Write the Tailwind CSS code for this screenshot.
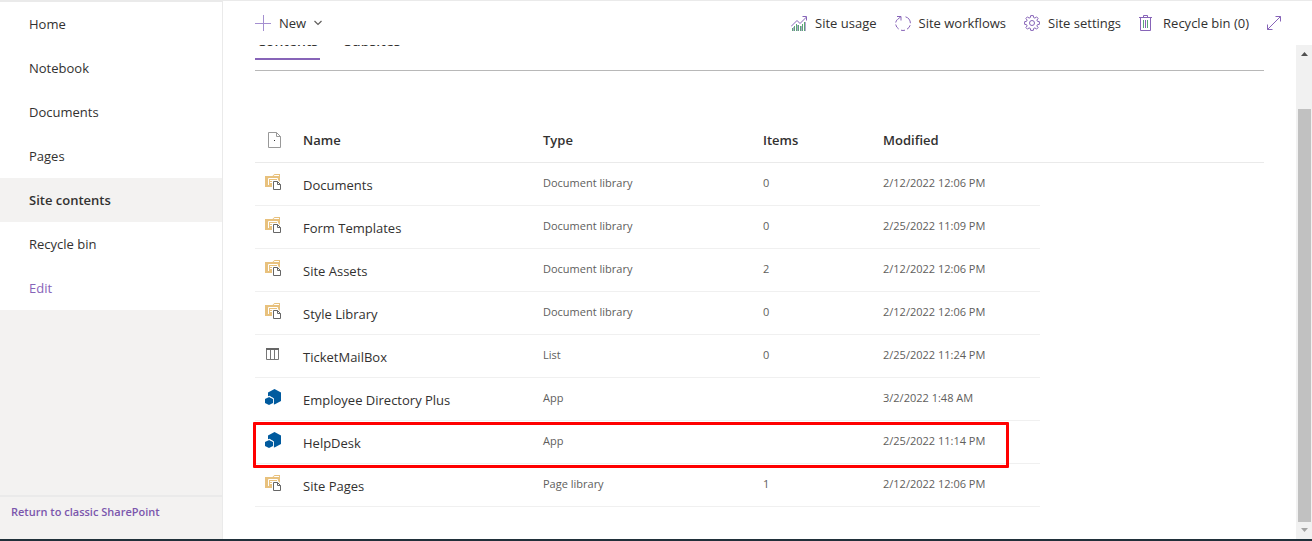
<!DOCTYPE html>
<html lang="en">
<head>
<meta charset="utf-8">
<meta name="viewport" content="width=device-width, initial-scale=1">
<title>Site contents</title>
<script src="https://cdn.jsdelivr.net/npm/@tailwindcss/browser@4"></script>
</head>
<body class="flex h-screen flex-col overflow-hidden bg-white font-['Open_Sans',sans-serif] text-[13px] leading-5 text-[#323130]">
<svg class="hidden" aria-hidden="true">
  <symbol id="library" viewBox="0 0 16 16">
    <path fill="#e8c17d" d="M0 2h7.500l2-2H15v13H0z"/>
    <path fill="#fff" d="M9.500 1H14v1H8.500z"/>
    <path fill="none" stroke="#fff" d="M3.500 11V4.500h9V7"/>
    <path fill="#fff" d="M5 6h2v1H5zM5 8h2v1H5zM8 6h3v1H8z"/>
    <path fill="#fff" d="M7 6h6l3 3v7H7z"/>
    <path fill="none" stroke="#666" d="M8.500 7.500h4l3 3v5h-7zM12.500 7.500v3h3"/>
  </symbol>
  <symbol id="list" viewBox="0 0 16 16">
    <path fill="none" stroke="#777" d="M1.500 2.500h12v11h-12zM5.500 4v9.500M9.500 4v9.500"/>
    <path fill="#666" d="M1 2h13v2H1z"/>
  </symbol>
  <symbol id="app" viewBox="0 0 16 16">
    <path fill="#005a9e" d="M9.500 0L16 3.500v8.500l-6.500 3.500L8.500 15V9.500L4.500 7 3 7.500V3.500z"/>
    <path fill="#005a9e" d="M4 8l4 2v4l-4 2-4-2v-4z"/>
    <path fill="none" stroke="#fff" stroke-width=".8" d="M2.500 8L4.500 7.300 8.500 9.500V15"/>
  </symbol>
</svg>
<div class="flex min-h-0 flex-1">
  <aside class="flex w-[223px] shrink-0 flex-col border-t-2 border-r border-t-[#eaeaea] border-r-[#eaeaea] bg-[#f3f2f1]">
    <nav class="flex flex-col bg-white">
      <a href="#" class="flex h-11 items-center px-[29px]">Home</a>
      <a href="#" class="flex h-11 items-center px-[29px]">Notebook</a>
      <a href="#" class="flex h-11 items-center px-[29px]">Documents</a>
      <a href="#" class="flex h-11 items-center px-[29px]">Pages</a>
      <a href="#" class="flex h-11 items-center bg-[#f3f2f1] px-[29px] font-semibold" aria-current="page">Site contents</a>
      <a href="#" class="flex h-11 items-center px-[29px]">Recycle bin</a>
      <button type="button" class="flex h-11 items-center px-[29px] text-[#8764b8]">Edit</button>
    </nav>
    <div class="mt-auto h-11 border-t-2 border-[#eaeaea] px-[11px] pt-1">
      <a href="#" class="text-[11px] font-semibold text-[#7b57ad]">Return to classic SharePoint</a>
    </div>
  </aside>
  <main class="flex min-w-0 flex-1 flex-col">
    <header class="flex h-[45px] shrink-0 items-center justify-between border-t border-[#eaeaea] pr-[29px] pl-8">
      <button type="button" class="flex items-center gap-2">
        <svg class="size-4" viewBox="0 0 16 16" fill="none"><path stroke="#a48fd0" d="M0 8.500h16"/><path stroke="#a48fd0" d="M8.500 0v16"/></svg>
        <span>New</span>
        <svg class="size-2" viewBox="0 0 8 8" fill="none"><path stroke="#605e5c" stroke-width="1.200" d="M.5 2L4 5.500 7.500 2"/></svg>
      </button>
      <div class="flex items-center gap-[18px]">
        <button type="button" class="flex items-center gap-2">
          <svg class="size-4" viewBox="0 0 16 16" fill="none"><path stroke="#5aa875" d="M1.500 13v3M3.500 11v5M5.500 9v7M7.500 10v6M9.500 11v5M11.500 9v7M13.500 7v9"/><path stroke="#8764b8" stroke-opacity=".6" d="M2.500 12v4M6.500 10v6M10.500 11v5M14.500 7v9"/><path stroke="#8764b8" d="M0 11.500l6-6 3 3 6.500-6.500M11.500 1.500h4v4"/></svg>
          <span>Site usage</span>
        </button>
        <button type="button" class="flex items-center gap-2">
          <svg class="size-4" viewBox="0 0 16 16" fill="none" stroke="#8764b8"><path d="M2 1.500h4v4M6 1.500L2.500 4.500M2.300 4.500a7 7 0 0 0-1.600 3M.7 9.500a7 7 0 0 0 3 4.500M6 15.200a7 7 0 0 0 4 0M12 14.200a7 7 0 0 0 3.200-4M15.400 8.200A7 7 0 0 0 10.500 1.800"/></svg>
          <span>Site workflows</span>
        </button>
        <button type="button" class="flex items-center gap-2">
          <svg class="size-4" viewBox="0 0 16 16" fill="none" stroke="#8764b8"><circle cx="8" cy="8" r="2.500"/><path stroke-linejoin="round" d="M6.700.6h2.600l.4 2 1.200.5 1.700-1.200 1.500 1.500-1.200 1.700.5 1.200 2 .4v2.600l-2 .4-.5 1.200 1.200 1.700-1.500 1.500-1.700-1.200-1.200.5-.4 2H6.700l-.4-2-1.200-.5-1.700 1.200-1.500-1.500 1.200-1.700-.5-1.200-2-.4V6.700l2-.4.5-1.200-1.200-1.700 1.500-1.500 1.700 1.200 1.200-.5z"/></svg>
          <span>Site settings</span>
        </button>
        <button type="button" class="flex items-center gap-2">
          <svg class="size-4" viewBox="0 0 16 16" fill="none"><path stroke="#8764b8" d="M0 2.500h13M4.500 2.500v-2h4v2M1.500 2.500v13h10v-13"/><path stroke="#5aa875" d="M4.500 5v8M8.500 5v8"/><path stroke="#8764b8" d="M6.500 5v8"/></svg>
          <span>Recycle bin (0)</span>
        </button>
        <button type="button" aria-label="Expand content">
          <svg class="block size-4" viewBox="0 0 16 16" fill="none" stroke="#8764b8"><path d="M.5 14.500l13-13M8.500 1.500h5v5M.5 9.500v5h5"/></svg>
        </button>
      </div>
    </header>
    <div class="flex min-h-0 flex-1">
      <div class="min-w-0 flex-1 overflow-hidden pr-8 pl-8">
        <!-- The tab strip is scrolled partly under the command bar -->
        <div class="-mt-[13px] flex h-[39px] items-start gap-[22px] border-b border-[#b8b8b8]" role="tablist">
          <button type="button" role="tab" aria-selected="true" class="h-7 border-b-2 border-[#8764b8] px-0.5 pb-[9px] text-sm leading-4 font-semibold">Contents</button>
          <button type="button" role="tab" aria-selected="false" class="h-7 border-b-2 border-transparent px-0.5 pb-[9px] text-sm leading-4 font-semibold">Subsites</button>
        </div>
        <table class="mt-12 w-full table-fixed border-separate border-spacing-0 text-left [&_td]:border-b [&_td]:border-[#f0f0f0] [&_td]:p-0 [&_td]:align-top [&_td]:text-[11px] [&_td]:text-[#605e5c] [&_td:last-child]:border-0 [&_th]:border-b [&_th]:border-[#eaeaea] [&_th]:p-0 [&_th]:pb-0.5 [&_th]:font-semibold">
          <colgroup><col class="w-12"><col class="w-60"><col class="w-[220px]"><col class="w-[120px]"><col class="w-[157px]"><col></colgroup>
          <thead>
            <tr class="h-11">
              <th scope="col" aria-label="File type"><svg class="ml-3 size-4" viewBox="0 0 16 16" fill="none"><path stroke="#999" d="M1.500.5h8l4 4v11h-12zM9.500.5v4h4"/><path fill="#333" d="M7 8h1v1H7z"/></svg></th>
              <th scope="col">Name</th><th scope="col">Type</th><th scope="col">Items</th><th scope="col">Modified</th><th></th>
            </tr>
          </thead>
          <tbody>
            <tr class="h-[43px]"><td><svg class="mt-[11px] ml-[10px] size-4"><use href="#library"/></svg></td><td><a href="#" class="block pt-3 text-[13px] text-[#323130]">Documents</a></td><td><div class="pt-[10px]">Document library</div></td><td><div class="pt-[10px]">0</div></td><td><div class="pt-[10px]">2/12/2022 12:06 PM</div></td><td></td></tr>
            <tr class="h-[43px]"><td><svg class="mt-[11px] ml-[10px] size-4"><use href="#library"/></svg></td><td><a href="#" class="block pt-3 text-[13px] text-[#323130]">Form Templates</a></td><td><div class="pt-[10px]">Document library</div></td><td><div class="pt-[10px]">0</div></td><td><div class="pt-[10px]">2/25/2022 11:09 PM</div></td><td></td></tr>
            <tr class="h-[43px]"><td><svg class="mt-[11px] ml-[10px] size-4"><use href="#library"/></svg></td><td><a href="#" class="block pt-3 text-[13px] text-[#323130]">Site Assets</a></td><td><div class="pt-[10px]">Document library</div></td><td><div class="pt-[10px]">2</div></td><td><div class="pt-[10px]">2/12/2022 12:06 PM</div></td><td></td></tr>
            <tr class="h-[43px]"><td><svg class="mt-[11px] ml-[10px] size-4"><use href="#library"/></svg></td><td><a href="#" class="block pt-3 text-[13px] text-[#323130]">Style Library</a></td><td><div class="pt-[10px]">Document library</div></td><td><div class="pt-[10px]">0</div></td><td><div class="pt-[10px]">2/12/2022 12:06 PM</div></td><td></td></tr>
            <tr class="h-[43px]"><td><svg class="mt-[11px] ml-[10px] size-4"><use href="#list"/></svg></td><td><a href="#" class="block pt-3 text-[13px] text-[#323130]">TicketMailBox</a></td><td><div class="pt-[10px]">List</div></td><td><div class="pt-[10px]">0</div></td><td><div class="pt-[10px]">2/25/2022 11:24 PM</div></td><td></td></tr>
            <tr class="h-[43px]"><td><svg class="mt-[11px] ml-[10px] size-4"><use href="#app"/></svg></td><td><a href="#" class="block pt-3 text-[13px] text-[#323130]">Employee Directory Plus</a></td><td><div class="pt-[10px]">App</div></td><td></td><td><div class="pt-[10px]">3/2/2022 1:48 AM</div></td><td></td></tr>
            <tr class="h-[43px]"><td class="relative"><div class="pointer-events-none absolute top-[1px] -left-[2px] z-10 h-[46px] w-[756px] rounded-[1px] border-3 border-[#ff0000]"></div><svg class="mt-[11px] ml-[10px] size-4"><use href="#app"/></svg></td><td><a href="#" class="block pt-3 text-[13px] text-[#323130]">HelpDesk</a></td><td><div class="pt-[10px]">App</div></td><td></td><td><div class="pt-[10px]">2/25/2022 11:14 PM</div></td><td></td></tr>
            <tr class="h-[43px]"><td><svg class="mt-[11px] ml-[10px] size-4"><use href="#library"/></svg></td><td><a href="#" class="block pt-3 text-[13px] text-[#323130]">Site Pages</a></td><td><div class="pt-[10px]">Page library</div></td><td><div class="pt-[10px]">1</div></td><td><div class="pt-[10px]">2/12/2022 12:06 PM</div></td><td></td></tr>
          </tbody>
        </table>
      </div>
      <div class="flex w-4 shrink-0 flex-col items-center bg-[#f1f1f1]" aria-hidden="true">
        <svg class="h-4 w-4 shrink-0" viewBox="0 0 16 16"><path fill="#505050" d="M5 11l3.500-4 3.500 4z"/></svg>
        <div class="mt-12 w-[13px] flex-1 bg-[#c1c1c1]"></div>
        <svg class="h-[17px] w-4 shrink-0" viewBox="0 0 16 17"><path fill="#a3a3a3" d="M5 6h7l-3.500 4z"/></svg>
      </div>
    </div>
  </main>
</div>
<div class="h-[2px] shrink-0 bg-[#20303a]"></div>
</body>
</html>
